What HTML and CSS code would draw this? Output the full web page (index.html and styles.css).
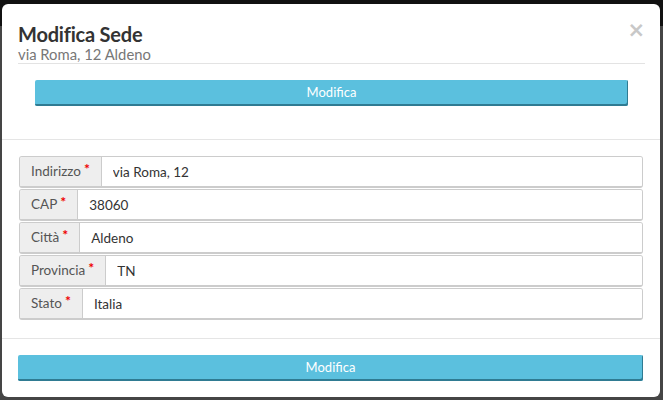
FILE: index.html
```html
<!DOCTYPE html>
<html lang="it">
<head>
  <meta charset="UTF-8" />
  <title>Modifica Sede</title>
  <link rel="stylesheet" href="styles.css">
</head>
<body>
  <div class="modal">
    <div class="modal-header">
      <button class="close" type="button">&times;</button>
      <h3 class="title">Modifica Sede</h3>
      <div class="subtitle">via Roma, 12 Aldeno</div>
      <div class="header-action">
        <button class="btn-info" type="button">Modifica</button>
      </div>
    </div>

    <div class="modal-body">
      <div class="input-group">
        <span class="addon">Indirizzo <span class="req">*</span></span>
        <input type="text" value="via Roma, 12">
      </div>
      <div class="input-group">
        <span class="addon">CAP <span class="req">*</span></span>
        <input type="text" value="38060">
      </div>
      <div class="input-group">
        <span class="addon">Città <span class="req">*</span></span>
        <input type="text" value="Aldeno">
      </div>
      <div class="input-group">
        <span class="addon">Provincia <span class="req">*</span></span>
        <input type="text" value="TN">
      </div>
      <div class="input-group">
        <span class="addon">Stato <span class="req">*</span></span>
        <input type="text" value="Italia">
      </div>
    </div>

    <div class="modal-footer">
      <button class="btn-info" type="button">Modifica</button>
    </div>
  </div>
</body>
</html>
```

FILE: styles.css
```css
body {
  font-family: "Lato", sans-serif;
  background: linear-gradient(#111 0 26px, #454545 26px);
  color: #555;
  margin: 0;
  padding: 4px 3px 3px 2px;
  height: 400px;
  box-sizing: border-box;
}

.modal {
  background: #fff;
  border-radius: 6px;
  height: 393px;
  box-sizing: border-box;
  overflow: hidden;
}

.modal-header {
  position: relative;
  padding: 18px 15px 0 16px;
  height: 136px;
  box-sizing: border-box;
  border-bottom: 1px solid #e5e5e5;
}

.close {
  position: absolute;
  top: 16px;
  right: 15px;
  border: none;
  background: none;
  padding: 0;
  font-family: "DejaVu Sans", sans-serif;
  font-size: 21px;
  font-weight: bold;
  color: #c8c8c8;
  line-height: 1;
  cursor: pointer;
}

.title {
  margin: 0;
  font-size: 20px;
  font-weight: 700;
  color: #333;
  line-height: 24px;
  letter-spacing: -0.2px;
}

.subtitle {
  font-size: 14.8px;
  color: #777;
  line-height: 16px;
  padding-bottom: 1px;
  border-bottom: 1px solid #e3e3e3;
}

.header-action {
  padding: 16px 17px 0 17px;
}

.btn-info {
  display: block;
  width: 100%;
  height: 26px;
  border: none;
  border-radius: 2px;
  background: #5bc0de;
  box-shadow: inset -1px -2px 0 #2f7b92;
  color: #fff;
  font-family: inherit;
  font-size: 13px;
  padding: 0 0 2px;
  cursor: pointer;
}

.modal-body {
  padding: 16px 17px 0 17px;
  height: 199px;
  box-sizing: border-box;
  border-bottom: 1px solid #e5e5e5;
}

.input-group {
  display: flex;
  height: 32px;
  margin-bottom: 1px;
  border: 1px solid #ccc;
  border-bottom-width: 2px;
  border-radius: 3px;
  box-sizing: border-box;
  overflow: hidden;
}

.addon {
  display: flex;
  align-items: center;
  padding: 0 11px;
  background: #eee;
  border-right: 1px solid #ccc;
  font-size: 13.5px;
  color: #555;
  white-space: nowrap;
  padding-bottom: 2px;
}

.req {
  color: #e00;
  font-size: 14px;
  font-weight: bold;
  margin-left: 3px;
  position: relative;
  top: -2px;
}

.input-group input {
  flex: 1;
  border: none;
  padding: 0 11px;
  font-family: inherit;
  font-size: 13.5px;
  color: #333;
  outline: none;
}

.modal-footer {
  padding: 16px 17px 0 16px;
}
```
